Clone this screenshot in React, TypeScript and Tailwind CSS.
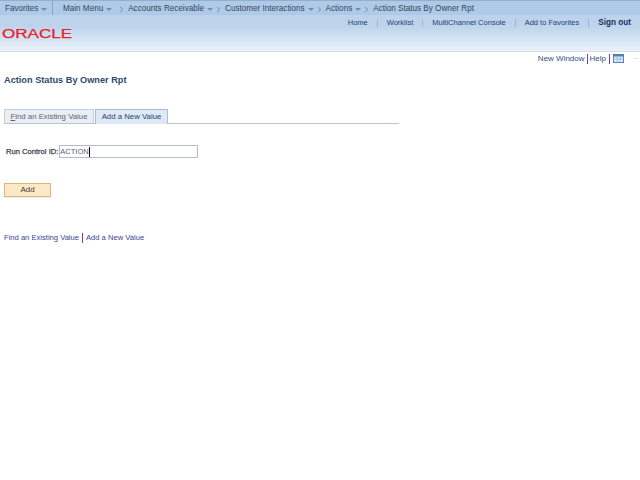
import { ChevronRight } from "lucide-react"

const crumbs = ["Accounts Receivable", "Customer Interactions", "Actions"]
const links = ["Home", "Worklist", "MultiChannel Console", "Add to Favorites"]

function Caret() {
  return <span className="ml-[3px] inline-block h-0 w-0 border-x-[3px] border-t-[3px] border-x-transparent border-t-[#6f8fb5]" />
}

function Sep() {
  return <ChevronRight className="ml-[1px] mr-[2px] size-[9px] text-[#44587a]" strokeWidth={1.5} />
}

export default function App() {
  return (
    <div className="h-[480px] w-[640px] overflow-hidden whitespace-nowrap bg-white font-['Liberation_Sans',Arial,sans-serif] text-[8px] leading-none">
      <header className="h-[52px] border-b border-[#d9dde6] bg-gradient-to-b from-[#bcd3eb] from-50% to-[#eaf1fa]">
        <nav className="flex h-[15px] items-center border-t border-[#8fb0d3] bg-[#aecae6] text-[8.15px] text-[#34475f]">
          <div className="flex h-full w-[53px] items-center border-r border-[#7fa4cc] pl-[5px] pt-[2px]">
            Favorites
            <Caret />
          </div>
          <div className="flex items-center pl-[10px] pt-[2px]">
            Main Menu
            <Caret />
            <span className="w-[4px]" />
            <Sep />
            {crumbs.map((c) => (
              <span key={c} className="flex items-center">
                {c}
                <Caret />
                <Sep />
              </span>
            ))}
            Action Status By Owner Rpt
          </div>
        </nav>
        <div className="flex h-[15px] items-center justify-end pr-[9px] text-[7.5px] text-[#24427a]">
          {links.map((l) => (
            <span key={l} className="mr-[9px] flex h-[8px] items-center border-r border-[#9db7d3] pr-[9px]">
              {l}
            </span>
          ))}
          <span className="mt-[2px] text-[8.2px] font-bold text-[#14305f]">Sign out</span>
        </div>
        <div className="mt-[-3px] flex h-[12px] pl-[2px]">
          <svg width="70" height="12" viewBox="0 0 70 12">
            <text x="0" y="10.5" textLength="70" lengthAdjust="spacingAndGlyphs" fontSize="12" fontFamily="Liberation Sans" fill="#e8202a" stroke="#e8202a" strokeWidth="0.25">
              ORACLE
            </text>
          </svg>
        </div>
      </header>

      <div className="flex h-[13px] items-center justify-end pr-[1px] text-[#35507f]">
        New Window
        <span className="mx-[2px] h-[10px] border-l border-[#7a3fa0]" />
        Help
        <span className="mx-[3px] h-[10px] border-l border-[#7a3fa0]" />
        <svg width="11" height="9" viewBox="0 0 11 9">
          <rect x="0.5" y="0.5" width="10" height="8" fill="#dce8f6" stroke="#4f7fb8" />
          <rect x="0" y="0" width="11" height="2.5" fill="#4f7fb8" />
          <path d="M0 5h11M4 3v6M7 3v6" stroke="#8fb0d8" strokeWidth="0.7" />
        </svg>
        <span className="ml-[10px] w-[5px] border-t border-[#e4e4e4]" />
      </div>

      <main className="px-[4px]">
        <h1 className="mt-[11px] text-[9.2px] font-bold text-[#30486f]">Action Status By Owner Rpt</h1>

        <div className="mt-[24px] flex h-[15px] w-[395px] items-end gap-[1px] border-b border-[#b7c6d8]">
          <div className="flex h-[14px] w-[90px] items-center justify-center border border-b-0 border-[#c5cfda] bg-[#e9eef4] text-[7.8px] text-[#5c6470]">
            <span><span className="underline">F</span>ind an Existing Value</span>
          </div>
          <div className="relative top-[1px] flex h-[15px] w-[73px] items-center justify-center border border-b-0 border-[#a9bdd4] bg-[#dfe9f6] text-[7.8px] text-[#1f3f72]">
            Add a New Value
          </div>
        </div>

        <div className="mt-[21px] flex items-center pl-[2px]">
          <label className="text-[7.6px] text-[#3a4048] [-webkit-text-stroke:0.25px_#3a4048]">Run Control ID:</label>
          <div className="ml-[1px] flex h-[13px] w-[139px] items-center border border-[#b6bcc4] text-[7.5px] text-[#55607a]">
            ACTION
            <span className="h-[10px] border-l border-black" />
          </div>
        </div>

        <button className="mt-[25px] block h-[14px] w-[47px] border border-[#e0b57d] bg-[#fbe9c6] text-center text-[#3a3a3a] shadow-[0_1px_0_#ececec]">
          Add
        </button>

        <div className="mt-[36px] flex items-center text-[7.6px] text-[#3c3f94]">
          Find an Existing Value
          <span className="mx-[3px] h-[10px] border-l border-[#a0308f]" />
          Add a New Value
        </div>
      </main>
    </div>
  )
}
